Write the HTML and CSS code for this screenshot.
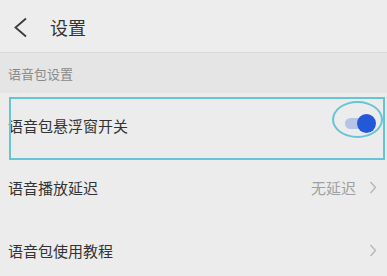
FILE: index.html
```html
<!DOCTYPE html>
<html lang="zh">
<head>
<meta charset="utf-8">
<link rel="stylesheet" href="styles.css">
</head>
<body>
<div class="page">
  <header class="topbar">
    <svg class="back" width="15" height="21" viewBox="0 0 15 21"><path d="M13 1.5 L2.5 10.5 L13 19.5" fill="none" stroke="#3a3a3a" stroke-width="1.8"/></svg>
    <span class="title">设置</span>
  </header>
  <div class="section">语音包设置</div>
  <div class="row row-float">
    <span class="label">语音包悬浮窗开关</span>
    <span class="toggle"><span class="track"></span><span class="knob"></span></span>
    <div class="mark-box"></div>
    <div class="mark-ellipse"></div>
  </div>
  <div class="row">
    <span class="label">语音播放延迟</span>
    <span class="value">无延迟</span>
    <svg class="chev" width="8" height="13" viewBox="0 0 8 13"><path d="M1.5 1 L6.5 6.5 L1.5 12" fill="none" stroke="#b5b5b5" stroke-width="1.3"/></svg>
  </div>
  <div class="row">
    <span class="label">语音包使用教程</span>
    <svg class="chev" width="8" height="13" viewBox="0 0 8 13"><path d="M1.5 1 L6.5 6.5 L1.5 12" fill="none" stroke="#b5b5b5" stroke-width="1.3"/></svg>
  </div>
</div>
</body>
</html>
```
FILE: styles.css
```css
html, body {
  margin: 0;
  padding: 0;
  background: #ececec;
  font-family: "Noto Sans CJK SC", "Noto Sans", sans-serif;
  overflow: hidden;
}
.page {
  width: 387px;
  height: 276px;
  overflow: hidden;
}
.topbar {
  height: 53px;
  border-bottom: 1px solid #d9d9d9;
  background: #ededed;
  display: flex;
  align-items: center;
  padding-left: 13px;
  box-sizing: border-box;
}
.back {
  display: block;
  margin-top: 2px;
}
.title {
  margin-left: 22px;
  font-size: 18px;
  color: #333;
  line-height: 1;
  margin-top: 1px;
}
.section {
  height: 40px;
  background: #e5e5e5;
  display: flex;
  align-items: center;
  padding-left: 8px;
  font-size: 13px;
  color: #8a8a8a;
  line-height: 1;
}
.row {
  position: relative;
  height: 63px;
  display: flex;
  align-items: center;
  padding: 0 10px 0 8px;
  background: #ececec;
}
.label {
  flex: 1;
  font-size: 15px;
  color: #333;
  line-height: 1;
}
.row-float {
  z-index: 1;
}
.row-float .label {
  margin-top: 1px;
}
.value {
  font-size: 15px;
  color: #a0a0a0;
  line-height: 1;
  margin-right: 13px;
}
.chev {
  display: block;
}
.toggle {
  position: relative;
  width: 31px;
  height: 19px;
  margin-top: -3px;
  margin-right: 1px;
}
.track {
  position: absolute;
  left: 0;
  top: 4px;
  width: 22px;
  height: 11px;
  border-radius: 6px;
  background: #b6c3e6;
}
.knob {
  position: absolute;
  right: 0;
  top: 0;
  width: 19px;
  height: 19px;
  border-radius: 50%;
  background: #2358d8;
}
.mark-box {
  position: absolute;
  left: 9px;
  top: 4px;
  width: 376px;
  height: 63px;
  border: 2px solid #67c4d6;
  box-sizing: border-box;
}
.mark-ellipse {
  position: absolute;
  left: 332px;
  top: 8px;
  width: 51px;
  height: 37px;
  border: 2px solid #67c4d6;
  border-radius: 50%;
  box-sizing: border-box;
}
```
